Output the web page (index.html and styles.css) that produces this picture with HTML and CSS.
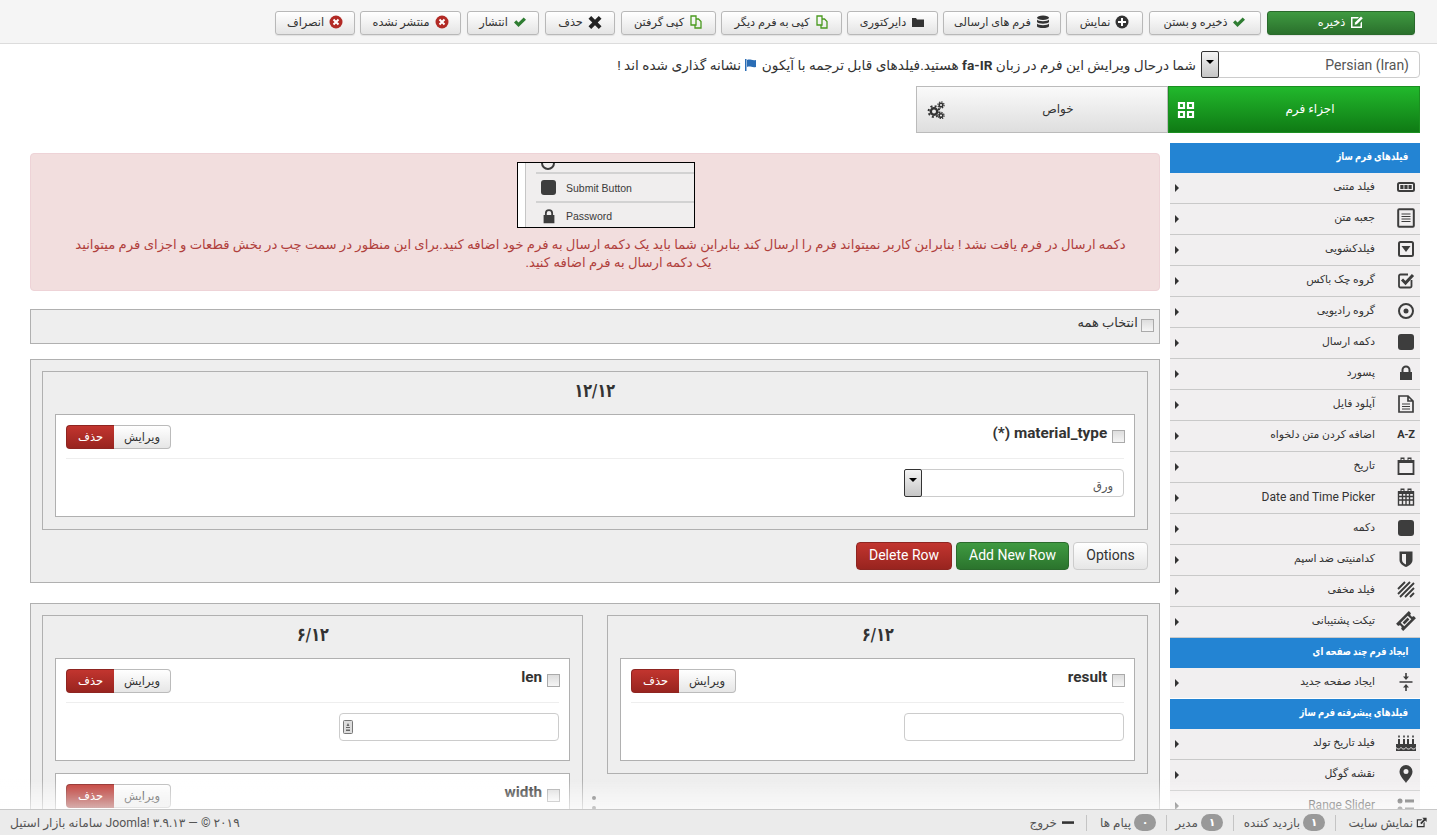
FILE: index.html
```html
<!DOCTYPE html>
<html lang="fa" dir="rtl">
<head>
<meta charset="utf-8">
<title>فرم ساز</title>
<link rel="stylesheet" href="styles.css">
</head>
<body>
<header class="toolbar">
  <a class="tbtn save"><svg class="ti" viewBox="0 0 14 14"><path fill="#fff" d="M1 2h8L7.500 3.500H2.500v8h8V8L12 6.500V13H1z"/><path fill="#fff" d="M5 7.500 11 1.500 12.800 3.300 6.800 9.300 4.700 9.700z"/></svg>ذخیره</a>
  <a class="tbtn w-b"><svg class="ti" viewBox="0 0 14 14"><path fill="#2f7d32" d="M1 7.500 3.300 5.200 5.500 7.400 10.700 2.500 13 4.800 5.500 12z"/></svg>ذخیره و بستن</a>
  <a class="tbtn w-c"><svg class="ti" viewBox="0 0 14 14"><circle cx="7" cy="7" r="6.500" fill="#333"/><path fill="#fff" d="M6 3h2v3h3v2H8v3H6V8H3V6h3z"/></svg>نمایش</a>
  <a class="tbtn w-d"><svg class="ti" viewBox="0 0 14 14"><ellipse cx="7" cy="2.700" rx="6" ry="2.200" fill="#333"/><path fill="#333" d="M1 4.500c1 2.300 11 2.300 12 0V7c-1 2.300-11 2.300-12 0zM1 8.500c1 2.300 11 2.300 12 0V11c0 2.800-12 2.800-12 0z"/></svg>فرم های ارسالی</a>
  <a class="tbtn w-e"><svg class="ti" viewBox="0 0 14 14"><path fill="#333" d="M1 3h4l1 1.500h7V12H1z"/></svg>دایرکتوری</a>
  <a class="tbtn w-f"><svg class="ti" viewBox="0 0 14 14"><path fill="none" stroke="#4a9a1f" stroke-width="1.300" d="M2 1h5v9H2zM7 4h2.500L12 6.500V13H6v-3"/></svg>کپی به فرم دیگر</a>
  <a class="tbtn w-g"><svg class="ti" viewBox="0 0 14 14"><path fill="none" stroke="#4a9a1f" stroke-width="1.300" d="M2 1h5v9H2zM7 4h2.500L12 6.500V13H6v-3"/></svg>کپی گرفتن</a>
  <a class="tbtn w-h"><svg class="ti" viewBox="0 0 14 14"><path fill="#222" d="M3.200 1 7 4.800 10.800 1 13.500 3.700 9.700 7.500 13.500 11.300 10.800 14 7 10.200 3.200 14 .5 11.300 4.300 7.500.5 3.700z"/></svg>حذف</a>
  <a class="tbtn w-i"><svg class="ti" viewBox="0 0 14 14"><path fill="#2f7d32" d="M1 7.500 3.300 5.200 5.500 7.400 10.700 2.500 13 4.800 5.500 12z"/></svg>انتشار</a>
  <a class="tbtn w-j"><svg class="ti" viewBox="0 0 14 14"><circle cx="7" cy="7" r="6.500" fill="#b22a25"/><path stroke="#fff" stroke-width="2" d="M4.500 4.500l5 5M9.500 4.500l-5 5"/></svg>منتشر نشده</a>
  <a class="tbtn w-k"><svg class="ti" viewBox="0 0 14 14"><circle cx="7" cy="7" r="6.500" fill="#b22a25"/><path stroke="#fff" stroke-width="2" d="M4.500 4.500l5 5M9.500 4.500l-5 5"/></svg>انصراف</a>
</header>

<div class="langbar">
  <div class="fake-select lang"><span class="val latin">Persian (Iran)</span><span class="arrow"></span></div>
  <p class="langnote">شما درحال ویرایش این فرم در زبان <b class="latin">fa-IR</b> هستید.فیلدهای قابل ترجمه با آیکون <svg class="flag" viewBox="0 0 14 14"><path fill="#2a6db5" d="M1 1h1.500v12H1zM3 2c3-1.500 5 1 9 0v7c-4 1-6-1.500-9 0z"/></svg> نشانه گذاری شده اند !</p>
</div>

<nav class="tabs">
  <a class="tab on"><svg class="tabicon" viewBox="0 0 18 18"><path fill="none" stroke="#fff" stroke-width="2.200" d="M2 2h5v5H2zM11 2h5v5h-5zM2 11h5v5H2zM11 11h5v5h-5z"/></svg><span>اجزاء فرم</span></a>
  <a class="tab"><svg class="tabicon" viewBox="0 0 18 18"><g fill="none" stroke="#333"><circle cx="7" cy="10.500" r="3.200" stroke-width="2.400"/><circle cx="7" cy="10.500" r="5.400" stroke-width="2" stroke-dasharray="2 2.240"/><circle cx="14" cy="4" r="1.800" stroke-width="1.500"/><circle cx="14" cy="4" r="3.100" stroke-width="1.200" stroke-dasharray="1.300 1.130"/><circle cx="14" cy="14.500" r="1.800" stroke-width="1.500"/><circle cx="14" cy="14.500" r="3.100" stroke-width="1.200" stroke-dasharray="1.300 1.130"/></g></svg><span>خواص</span></a>
</nav>

<div class="workspace">
  <aside class="sidebar">
    <h3 class="sec"><span>فیلدهای فرم ساز</span></h3>
    <ul class="items">
      <li><svg class="ic" viewBox="0 0 20 20"><rect x="2" y="6" width="16" height="8" rx="1.500" fill="none" stroke="#3d3d3d" stroke-width="2"/><path fill="#3d3d3d" d="M4.300 8h3.200v4H4.300zM8.400 8h3.200v4H8.400zM12.500 8h3.200v4h-3.200z"/></svg><span>فیلد متنی</span></li>
      <li><svg class="ic" viewBox="0 0 20 20"><rect x="2.200" y="1.200" width="15.600" height="17.600" rx="1" fill="none" stroke="#3d3d3d" stroke-width="2"/><path stroke="#3d3d3d" stroke-width="1.200" d="M5.500 6h9M5.500 8.500h9M5.500 11h9M5.500 13.500h9"/></svg><span>جعبه متن</span></li>
      <li><svg class="ic" viewBox="0 0 20 20"><rect x="3" y="3" width="14" height="14" rx="1.500" fill="none" stroke="#3d3d3d" stroke-width="2"/><path fill="#3d3d3d" d="M5.500 7h9L10 13z"/></svg><span>فیلدکشویی</span></li>
      <li><svg class="ic" viewBox="0 0 20 20"><path fill="none" stroke="#3d3d3d" stroke-width="1.800" d="M15.500 10v6a1.500 1.500 0 0 1-1.500 1.500H4.500A1.500 1.500 0 0 1 3 16V6a1.500 1.500 0 0 1 1.500-1.500H12"/><path fill="none" stroke="#3d3d3d" stroke-width="3" d="M6 9.500l3.500 3.500 7.500-8"/></svg><span>گروه چک باکس</span></li>
      <li><svg class="ic" viewBox="0 0 20 20"><circle cx="10" cy="10" r="7" fill="none" stroke="#3d3d3d" stroke-width="2"/><circle cx="10" cy="10" r="2.500" fill="#3d3d3d"/></svg><span>گروه رادیویی</span></li>
      <li><svg class="ic" viewBox="0 0 20 20"><rect x="2" y="2" width="16" height="16" rx="3" fill="#3d3d3d"/></svg><span>دکمه ارسال</span></li>
      <li><svg class="ic" viewBox="0 0 20 20"><path fill="#3d3d3d" d="M4 9h1.500V7a4.500 4.500 0 0 1 9 0v2H16v8H4zM7.500 9h5V7a2.500 2.500 0 0 0-5 0z"/></svg><span>پسورد</span></li>
      <li><svg class="ic" viewBox="0 0 20 20"><path fill="none" stroke="#3d3d3d" stroke-width="1.700" d="M3 2h9l5 5v11H3zM12 2v5h5"/><path stroke="#3d3d3d" stroke-width="1.200" d="M6 10h8M6 12.500h8M6 15h8"/></svg><span>آپلود فایل</span></li>
      <li><b class="ic az latin">A-Z</b><span>اضافه کردن متن دلخواه</span></li>
      <li><svg class="ic" viewBox="0 0 20 20"><path fill="none" stroke="#3d3d3d" stroke-width="1.800" d="M2.500 5h15v13h-15z"/><path fill="#3d3d3d" d="M2 4h16v3H2zM4.500 1.500h4v3h-1v-1.500h-2V4.500h-1zM11.500 1.500h4v3h-1v-1.500h-2V4.500h-1z"/></svg><span>تاریخ</span></li>
      <li><svg class="ic" viewBox="0 0 20 20"><path fill="none" stroke="#3d3d3d" stroke-width="1.400" d="M2.500 5h15v13h-15zM2.500 9.500h15M2.500 13h15M6.500 7v11M10 7v11M13.500 7v11"/><path fill="#3d3d3d" d="M2 4h16v3H2zM4.500 1.500h4v3h-1v-1.500h-2V4.500h-1zM11.500 1.500h4v3h-1v-1.500h-2V4.500h-1z"/></svg><span class="latin">Date and Time Picker</span></li>
      <li><svg class="ic" viewBox="0 0 20 20"><rect x="2" y="2" width="16" height="16" rx="3" fill="#3d3d3d"/></svg><span>دکمه</span></li>
      <li><svg class="ic" viewBox="0 0 20 20"><path fill="#3d3d3d" d="M3.500 2.500h13V11c0 3.500-3 5.500-6.500 7-3.500-1.500-6.500-3.500-6.500-7z"/><path fill="#f1eff0" d="M6 5h4v10.500C8 14.500 6 13 6 11z"/></svg><span>کدامنیتی ضد اسپم</span></li>
      <li><svg class="ic" viewBox="0 0 20 20"><path stroke="#3d3d3d" stroke-width="1.900" d="M2 9 9 2M2 14 14 2M4 17 18 3M9 17 18 8M14 17l4-4"/></svg><span>فیلد مخفی</span></li>
      <li><svg class="ic" viewBox="0 0 20 20"><g transform="rotate(-45 10 10)"><path fill="#3d3d3d" d="M1 5h18v3a2 2 0 0 0 0 4v3H1v-3a2 2 0 0 0 0-4z"/><path fill="#f1eff0" d="M5 7.500h10v5H5z"/><path fill="#3d3d3d" d="M6.500 8.700h7v2.600h-7z"/></g></svg><span>تیکت پشتیبانی</span></li>
    </ul>
    <h3 class="sec"><span>ایجاد فرم چند صفحه ای</span></h3>
    <ul class="items">
      <li class="flat"><svg class="ic" viewBox="0 0 20 20"><path fill="#3d3d3d" d="M9.200 1h1.600v3.500H13L10 8 7 4.500h2.200zM3.500 9.300h13v1.400h-13zM10 12l3 3.500h-2.200V19H9.200v-3.500H7z"/></svg><span>ایجاد صفحه جدید</span></li>
    </ul>
    <h3 class="sec"><span>فیلدهای پیشرفته فرم ساز</span></h3>
    <ul class="items">
      <li><svg class="ic" viewBox="0 0 20 20"><path fill="#3d3d3d" d="M0 11h20v7H0z"/><path stroke="#3d3d3d" stroke-width="2" d="M3 6v5M8 6v5M12 6v5M17 6v5"/><path stroke="#3d3d3d" stroke-width="1.600" d="M3 2.500v2M8 2.500v2M12 2.500v2M17 2.500v2"/><path stroke="#f1eff0" fill="none" d="M0 14.500c2 2 3.500 2 5 0 1.500 2 3.500 2 5 0 1.500 2 3.500 2 5 0 1.500 2 3.500 2 5 0"/></svg><span>فیلد تاریخ تولد</span></li>
      <li><svg class="ic" viewBox="0 0 20 20"><path fill="#3d3d3d" fill-rule="evenodd" d="M10 1a6.500 6.500 0 0 1 6.500 6.500C16.500 12 12 16 10 19 8 16 3.500 12 3.500 7.500A6.500 6.500 0 0 1 10 1zm0 4a2.500 2.500 0 1 0 0 5 2.500 2.500 0 0 0 0-5z"/></svg><span>نقشه گوگل</span></li>
      <li><svg class="ic" viewBox="0 0 20 20"><circle cx="4" cy="6" r="2.500" fill="#3d3d3d"/><circle cx="4" cy="14" r="2.500" fill="#3d3d3d"/><path fill="#3d3d3d" d="M9 4.500h9v3H9zM9 12.500h9v3H9z"/></svg><span class="latin">Range Slider</span></li>
    </ul>
  </aside>

  <main class="main">
    <section class="alert">
      <div class="shot">
        <div class="shot-row top"><i class="shot-ring"></i></div>
        <div class="shot-row"><i class="shot-sq"></i><span>Submit Button</span></div>
        <div class="shot-row"><svg class="shot-lock" viewBox="0 0 20 20"><path fill="#3d3d3d" d="M4 9h1.500V7a4.500 4.500 0 0 1 9 0v2H16v9H4zM7.500 9h5V7a2.500 2.500 0 0 0-5 0z"/></svg><span>Password</span></div>
      </div>
      <p>دکمه ارسال در فرم یافت نشد ! بنابراین کاربر نمیتواند فرم را ارسال کند بنابراین شما باید یک دکمه ارسال به فرم خود اضافه کنید.برای این منظور در سمت چپ در بخش قطعات و اجزای فرم میتوانید <span class="lastline">یک دکمه ارسال به فرم اضافه کنید.</span></p>
    </section>

    <label class="selectall"><input class="cb" type="checkbox"> انتخاب همه</label>

    <section class="row">
      <div class="col">
        <h2 class="coltitle"><span>۱۲/۱۲</span></h2>
        <article class="field">
          <div class="fhead">
            <label class="flabel"><input class="cb" type="checkbox"> <span class="latin">material_type (*)</span></label>
            <div class="btngroup"><a class="ge">ویرایش</a><a class="gd">حذف</a></div>
          </div>
          <div class="fbody">
            <div class="fake-select inner"><span class="val">ورق</span><span class="arrow"></span></div>
          </div>
        </article>
      </div>
      <div class="rowactions latin">
        <a class="ra">Options</a><a class="ra green">Add New Row</a><a class="ra red">Delete Row</a>
      </div>
    </section>

    <section class="row two">
      <div class="col">
        <h2 class="coltitle"><span>۶/۱۲</span></h2>
        <article class="field">
          <div class="fhead">
            <label class="flabel"><input class="cb" type="checkbox"> <span class="latin">result</span></label>
            <div class="btngroup"><a class="ge">ویرایش</a><a class="gd">حذف</a></div>
          </div>
          <div class="fbody"><input class="tinput" type="text"></div>
        </article>
      </div>
      <div class="dots"><i></i><i></i></div>
      <div class="col">
        <h2 class="coltitle"><span>۶/۱۲</span></h2>
        <article class="field">
          <div class="fhead">
            <label class="flabel"><input class="cb" type="checkbox"> <span class="latin">len</span></label>
            <div class="btngroup"><a class="ge">ویرایش</a><a class="gd">حذف</a></div>
          </div>
          <div class="fbody">
            <div class="inputwrap"><input class="tinput" type="text"><svg class="keyicon" viewBox="0 0 10 14"><rect x=".5" y=".5" width="9" height="13" rx="1" fill="#ddd" stroke="#777"/><path fill="#666" d="M5 3l1.500 3h-3zM3 7h4v1H3zM3 9.500h4v1.500H3z"/></svg></div>
          </div>
        </article>
        <article class="field">
          <div class="fhead">
            <label class="flabel"><input class="cb" type="checkbox"> <span class="latin">width</span></label>
            <div class="btngroup"><a class="ge">ویرایش</a><a class="gd">حذف</a></div>
          </div>
          <div class="fbody"><input class="tinput" type="text"></div>
        </article>
      </div>
    </section>
  </main>
</div>

<div class="fade"></div>
<footer class="status">
  <div class="st-items">
    <a class="st"><svg class="sti" viewBox="0 0 14 14"><path fill="#333" d="M1 3h7L6.500 4.500h-4v7h7V8L11 6.500V13H1z"/><path fill="#333" d="M8 1h5.500v5.500L11.600 4.600 7 9.200 5.300 7.500 9.900 2.900z"/></svg>نمایش سایت</a>
    <a class="st"><b class="badge">۱</b>بازدید کننده</a>
    <a class="st"><b class="badge">۱</b>مدیر</a>
    <a class="st"><b class="badge">۰</b>پیام ها</a>
    <a class="st"><svg class="sti logout" viewBox="0 0 14 4"><rect width="14" height="3" fill="#333"/></svg>خروج</a>
  </div>
  <div class="copy">۲۰۱۹ © — ۳.۹.۱۳ !Joomla سامانه بازار استیل</div>
</footer>
</body>
</html>
```
FILE: styles.css
```css
* { box-sizing: border-box; }
html, body { margin: 0; height: 835px; overflow: hidden; }
body {
  background: #fff;
  color: #333;
  font: 12px/18px Roboto, "DejaVu Sans", sans-serif;
}
.latin { font-family: Roboto, "DejaVu Sans", sans-serif; }
a { color: inherit; text-decoration: none; }

/* toolbar */
.toolbar {
  height: 44px;
  background: #f5f5f5;
  border-bottom: 1px solid #dcdcdc;
  display: flex;
  gap: 5px;
  padding: 11px 22px 0 0;
}
.tbtn {
  height: 24px;
  display: flex;
  align-items: center;
  justify-content: center;
  gap: 5px;
  font-size: 11.300px;
  white-space: nowrap;
  color: #333;
  border: 1px solid #b8b8b8;
  border-radius: 3px;
  background: linear-gradient(#fff, #e4e4e4);
  box-shadow: 0 1px 1px rgba(0,0,0,.08);
}
.ti { width: 14px; height: 14px; flex: none; margin-top: -3px; }
.save { width: 148px; color: #fff; border-color: #2a6a2c; background: linear-gradient(#3f9a41, #2a702c); }
.w-b { width: 112px; margin-right: 1px; }
.w-c { width: 77px; margin-right: 1px; }
.w-d { width: 118px; }
.w-e { width: 91px; }
.w-f { width: 121px; }
.w-g { width: 95px; }
.w-h { width: 70px; margin-right: 1px; }
.w-i { width: 72px; margin-right: 1px; }
.w-j { width: 101px; margin-right: 1px; }
.w-k { width: 80px; }

/* language */
.langbar {
  height: 42px;
  padding: 7px 17px 0 0;
  display: flex;
  gap: 5px;
}
.langnote { margin: 0; line-height: 28px; font-size: 13.700px; color: #333; white-space: nowrap; }
.flag { width: 14px; height: 14px; vertical-align: -2px; }
.fake-select {
  display: flex;
  justify-content: space-between;
  align-items: center;
  background: #fff;
  border: 1px solid #ccc;
  border-radius: 4px;
  color: #555;
}
.lang { width: 219px; height: 27px; padding-right: 10px; font-size: 14px; }
.arrow {
  width: 18px;
  align-self: stretch;
  margin: -1px 0 -1px -1px;
  border: 1px solid #333;
  border-radius: 2px;
  background: linear-gradient(#f4f4f4, #c6c6c6);
  position: relative;
}
.arrow::after {
  content: "";
  position: absolute;
  top: 8px;
  left: 4px;
  border: 4px solid transparent;
  border-top: 4px solid #000;
  border-bottom: 0;
}

/* tabs */
.tabs { display: flex; width: 504px; height: 47px; margin-right: 17px; }
.tab {
  flex: 1;
  display: flex;
  align-items: center;
  justify-content: center;
  position: relative;
  font-size: 12px;
  background: linear-gradient(#fafafa, #dedede);
  border: 1px solid #bbb;
}
.tab span { margin-left: 32px; margin-bottom: 2px; }
.tab.on { color: #fff; border-color: #1b8f20; background: linear-gradient(#22b82c, #0f7a14); }
.tabicon { position: absolute; width: 18px; height: 18px; }
.tab.on .tabicon { right: 224px; }
.tab:not(.on) .tabicon { right: 222px; }

/* layout */
.workspace { display: flex; gap: 10px; padding: 10px 17px 0 0; }
.sidebar { width: 250px; flex: none; }
.main { width: 1130px; flex: none; display: flex; flex-direction: column; gap: 18px; padding-top: 10px; }

/* sidebar */
.sec {
  margin: 0;
  height: 30px;
  line-height: 28px;
  padding-right: 12px;
  font-size: 11px;
  font-weight: 700;
  color: #fff;
  background: #2384d3;
}
.sec span { display: inline-block; transform: scaleX(.77); transform-origin: right center; white-space: nowrap; }
.items { list-style: none; margin: 0; padding: 0; }
.items li {
  height: 31px;
  background: #f1eff0;
  border-bottom: 1px solid #c9c9c9;
  display: flex;
  align-items: center;
  position: relative;
  font-size: 10.800px;
  color: #333;
  padding: 0 4px 2px 0;
}
.items li > span.latin { font-size: 12px; margin-bottom: 1px; }
.items li.flat { height: 30px; border-bottom: 0; margin-bottom: 1px; }
.items li::after {
  content: "";
  position: absolute;
  left: 5px;
  top: 11px;
  border: 4px solid transparent;
  border-left: 4px solid #333;
  border-right: 0;
}
.ic { width: 20px; height: 20px; flex: none; margin-left: 21px; }
.az { font-size: 11px; line-height: 20px; text-align: center; color: #333; letter-spacing: -.3px; direction: ltr; }

/* alert */
.alert {
  height: 138px;
  padding-top: 8px;
  background: #f2dede;
  border: 1px solid #eed3d7;
  border-radius: 4px;
  color: #b0403c;
  text-align: center;
}
.alert p { margin: 8px 30px 0 41px; font-size: 13.200px; line-height: 18px; }
.lastline { display: block; margin-left: 36px; }
.shot {
  width: 178px;
  height: 66px;
  margin-right: 464px;
  border: 1px solid #000;
  background: #f0eeee;
  direction: ltr;
  overflow: hidden;
  text-align: left;
  color: #3b3b3b;
  font: 10.500px/14px "Liberation Sans", sans-serif;
  padding-left: 18px;
  position: relative;
}
.shot::before {
  content: "";
  position: absolute;
  left: 0; top: 0; bottom: 0;
  width: 7px;
  background: #fff;
  border-right: 1px solid #c6c6c6;
}
.shot-row { display: flex; align-items: center; gap: 10px; height: 29px; padding-left: 5px; border-bottom: 2px solid #d2d2d2; }
.shot-row.top { height: 11px; align-items: flex-end; }
.shot-row:last-child { border-bottom: 0; height: 25px; }
.shot-ring { width: 14px; height: 14px; margin-bottom: -1px; border: 2px solid #3d3d3d; border-radius: 50%; transform: translateY(-3px); }
.shot-sq { width: 15px; height: 15px; border-radius: 3px; background: #3d3d3d; }
.shot-lock { width: 18px; height: 18px; margin: 0 -1.500px; }

/* select all */
.selectall {
  height: 35px;
  background: #eee;
  border: 1px solid #b0b0b0;
  padding: 3px 5px 0 0;
  display: block;
  font-size: 13px;
  line-height: 20px;
  color: #333;
}
.cb {
  appearance: none;
  width: 13px;
  height: 13px;
  margin: 0;
  border: 1px solid #aaa;
  background: linear-gradient(#ddd, #f5f5f5);
}
.selectall .cb { vertical-align: -5px; }

/* rows */
.row {
  background: #eee;
  border: 1px solid #b0b0b0;
  padding: 11px;
  margin-top: -3px;
}
.col {
  background: #eee;
  border: 1px solid #b0b0b0;
  padding: 0 12px 12px;
}
.coltitle {
  margin: 0;
  height: 42px;
  line-height: 38px;
  font-size: 19px;
  font-weight: 700;
  text-align: center;
  color: #333;
}
.coltitle span { display: inline-block; transform: scaleX(.76); }
.field {
  background: #fff;
  border: 1px solid #b0b0b0;
  padding: 0 10px;
  height: 103px;
}
.field + .field { margin-top: 12px; }
.fhead {
  height: 44px;
  padding-top: 10px;
  display: flex;
  justify-content: space-between;
  border-bottom: 1px solid #eee;
}
.flabel { font-size: 15.300px; font-weight: 700; line-height: 18px; color: #333; margin: -1px -1px 0 0; }
.flabel .cb { vertical-align: -5px; margin-left: 1px; }
.btngroup { display: flex; height: 24px; font-size: 11.500px; }
.ge, .gd { display: flex; align-items: center; justify-content: center; }
.ge { width: 57px; border: 1px solid #bbb; border-left: 0; border-radius: 0 4px 4px 0; background: linear-gradient(#fff, #e6e6e6); }
.gd { width: 48px; color: #fff; border: 1px solid #8e2521; border-right: 0; border-radius: 4px 0 0 4px; background: linear-gradient(#c2352f, #98241f); }
.fbody { padding-top: 10px; }
.fake-select.inner { width: 220px; height: 28px; padding-right: 10px; font-size: 11.500px; }
.fake-select.inner .val { padding-top: 6px; }
.tinput {
  display: block;
  width: 220px;
  height: 28px;
  border: 1px solid #ccc;
  border-radius: 4px;
  background: #fff;
}
.inputwrap { position: relative; width: 220px; }
.keyicon { position: absolute; left: 4px; top: 7px; width: 10px; height: 14px; }

.rowactions { display: flex; gap: 4px; padding-top: 12px; height: 40px; margin-bottom: 1px; }
.ra {
  display: flex;
  align-items: center;
  justify-content: center;
  width: 75px;
  height: 28px;
  padding-bottom: 2px;
  font-size: 14px;
  color: #333;
  border: 1px solid #ccc;
  border-radius: 4px;
  background: linear-gradient(#fff, #e6e6e6);
}
.ra.green { width: 113px; color: #fff; border-color: #2a6a2c; background: linear-gradient(#3f9a41, #2b742d); }
.ra.red { width: 96px; color: #fff; border-color: #8e2521; background: linear-gradient(#c2352f, #98241f); }

.row.two {
  display: grid;
  grid-template-columns: 541px 24px 541px;
  align-items: start;
  height: 232px;
  overflow: hidden;
  margin-top: 2px;
}
.dots { display: flex; flex-direction: column; align-items: center; gap: 6px; padding: 181px 2px 0 0; }
.dots i { width: 4px; height: 4px; border-radius: 50%; background: #666; }

/* footer */
.fade {
  position: fixed;
  left: 0; right: 0;
  bottom: 26px;
  height: 30px;
  pointer-events: none;
  background: linear-gradient(rgba(255,255,255,0), rgba(255,255,255,.65));
}
.status {
  position: fixed;
  left: 0; right: 0; bottom: 0;
  height: 26px;
  background: #ebebeb;
  border-top: 1px solid #c8c8c8;
  display: flex;
  justify-content: space-between;
  align-items: center;
  padding: 0 10px;
  font-size: 12px;
  color: #555;
}
.st-items { display: flex; }
.st { display: flex; align-items: center; gap: 3px; padding-right: 10px; border-left: 1px solid #c4c4c4; height: 16px; white-space: nowrap; }
.st:nth-child(1) { width: 92px; padding-right: 0; }
.st:nth-child(2) { width: 102px; }
.st:nth-child(3) { width: 67px; }
.st:nth-child(4) { width: 80px; }
.st:nth-child(5) { border-left: 0; padding-right: 12px; gap: 5px; }
.sti { width: 11px; height: 11px; flex: none; }
.logout { height: 4px; width: 12px; }
.badge {
  width: 22px;
  height: 17px;
  border-radius: 9px;
  background: #999;
  color: #fff;
  text-align: center;
  line-height: 17px;
  font-size: 11px;
}
.copy { font-size: 12.200px; color: #555; }
```
